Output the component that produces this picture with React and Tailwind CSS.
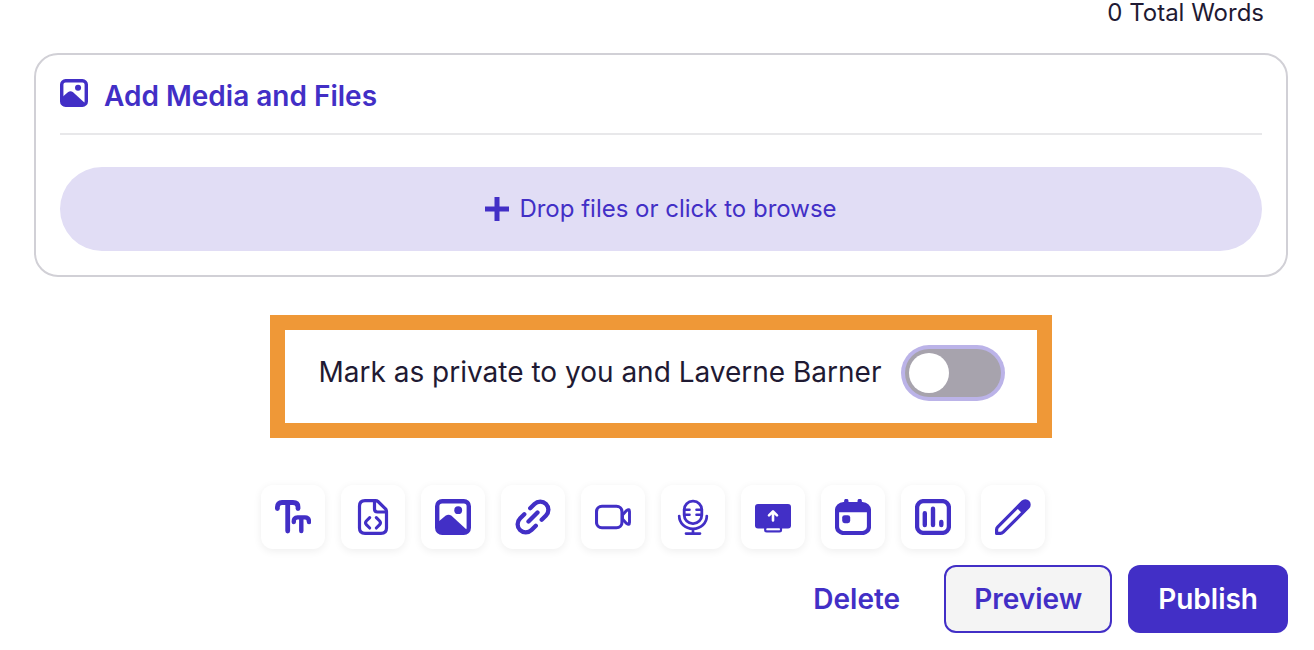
import { useRef, useState } from "react";

function Icon({ children, className = "size-9" }) {
  return (
    <svg
      viewBox="0 0 36 36"
      className={className}
      fill="none"
      stroke="currentColor"
      strokeLinecap="round"
      strokeLinejoin="round"
      aria-hidden="true"
    >
      {children}
    </svg>
  );
}

function ImageIcon({ className }) {
  return (
    <Icon className={className}>
      <rect x="2.2" y="2.2" width="31.6" height="31.6" rx="5" strokeWidth="4.4" />
      <circle cx="23.2" cy="11.2" r="3.9" fill="currentColor" stroke="none" />
      <path
        d="M3 23 L10.5 16.8 Q13.5 14.6 16.5 16.8 L32 31 V34 H3 Z"
        fill="currentColor"
        stroke="none"
      />
    </Icon>
  );
}

const tools = [
  {
    label: "Text",
    icon: (
      <Icon>
        <path
          d="M2.4 9.5 V8 Q2.4 3.5 7 3.5 H18 Q23 3.5 23 8 V9.5 M12.7 3.5 V32"
          strokeWidth="4.8"
        />
        <path
          d="M18.8 23 Q18.5 18.4 22.5 18.4 H30 Q34 18.4 34 23 M26.3 18.6 V32"
          strokeWidth="4.4"
        />
      </Icon>
    ),
  },
  {
    label: "Embed code",
    icon: (
      <Icon>
        <path
          d="M20.5 1.6 H10 Q4.5 1.6 4.5 7 V29 Q4.5 34.4 10 34.4 H26 Q31.5 34.4 31.5 29 V12.5 Q31.5 11 30.5 9.8 L23 2.5 Q22 1.6 20.5 1.6 Z M19.5 2 V10 Q19.5 13 22.5 13 H31"
          strokeWidth="3.2"
        />
        <path
          d="M14.7 18.6 L11.3 22 Q9.8 23.8 11.3 25.6 L14.7 29 M21.3 18.6 L24.7 22 Q26.2 23.8 24.7 25.6 L21.3 29"
          strokeWidth="3.1"
        />
      </Icon>
    ),
  },
  { label: "Image", icon: <ImageIcon className="size-9" /> },
  {
    label: "Link",
    icon: (
      <Icon>
        <path
          d="M15.2 9.3 L19.5 5 A8.13 8.13 0 0 1 31 16.5 L26.7 20.8 M20.8 26.7 L16.5 31 A8.13 8.13 0 0 1 5 19.5 L9.3 15.2 M13.5 22.5 L22.5 13.5"
          strokeWidth="4.3"
        />
      </Icon>
    ),
  },
  {
    label: "Video",
    icon: (
      <Icon>
        <rect x="1.5" y="7.2" width="25.5" height="21.6" rx="5.5" strokeWidth="3.1" />
        <path
          d="M27.5 16 L31.5 11.6 Q34.5 9.4 34.5 12.5 V23.5 Q34.5 26.6 31.5 24.4 L27.5 20 Z"
          strokeWidth="2.9"
        />
      </Icon>
    ),
  },
  {
    label: "Audio",
    icon: (
      <Icon>
        <rect x="9.2" y="2.2" width="17.6" height="22.4" rx="8.5" strokeWidth="2.8" />
        <path
          d="M9.5 10.7 H14.5 M21.5 10.7 H26.5 M9.5 15.7 H14.5 M21.5 15.7 H26.5"
          strokeWidth="2.6"
        />
        <path
          d="M4.2 17 C4.2 24 10 29.8 18 29.8 C26 29.8 31.8 24 31.8 17 M18 30 V34.6 M11 34.6 H25"
          strokeWidth="2.7"
        />
      </Icon>
    ),
  },
  {
    label: "Screen share",
    icon: (
      <Icon>
        <rect x="0" y="5" width="36" height="24.5" rx="3" fill="currentColor" stroke="none" />
        <path d="M10.2 28.5 V31 Q10.2 32.4 11.7 32.4 H24.5 Q26 32.4 26 31 V28.5" strokeWidth="2.2" />
        <path d="M12 30.3 H24.4" stroke="white" strokeWidth="1.6" strokeLinecap="butt" />
        <path d="M18 21.4 V12.8 M14 16.4 L18 12.4 L22 16.4" stroke="white" strokeWidth="2.6" />
      </Icon>
    ),
  },
  {
    label: "Event",
    icon: (
      <Icon>
        <path d="M11.3 2 V6 M24.7 2 V6" strokeWidth="4.4" />
        <rect x="2" y="5.2" width="32" height="28.8" rx="6.5" strokeWidth="4.2" />
        <path d="M2 12 Q2 5 9 5 H27 Q34 5 34 12 V13.3 H2 Z" fill="currentColor" stroke="none" />
        <rect x="7.2" y="16.2" width="8" height="8" rx="2.4" fill="currentColor" stroke="none" />
      </Icon>
    ),
  },
  {
    label: "Poll",
    icon: (
      <Icon>
        <rect x="2.1" y="2.1" width="31.8" height="31.8" rx="6.5" strokeWidth="4.3" />
        <path d="M9.8 14.2 V26 M18 9.8 V26 M26.3 23 V26" strokeWidth="4.4" />
      </Icon>
    ),
  },
  {
    label: "Draw",
    icon: (
      <Icon>
        <path
          d="M1.6 34.4 V30.5 Q1.6 29 2.8 27.8 L27.6 3 A3.8 3.8 0 0 1 33 8.4 L8.2 33.2 Q7 34.4 5.5 34.4 Z"
          strokeWidth="3.2"
        />
        <path
          d="M23.4 8.4 L28.4 3.4 A3.2 3.2 0 0 1 32.6 7.6 L27.6 12.6 Z"
          fill="currentColor"
          strokeWidth="3"
        />
      </Icon>
    ),
  },
];

function App() {
  const [isPrivate, setIsPrivate] = useState(false);
  const fileInput = useRef(null);

  return (
    <main className="bg-white pt-px pr-[26px] pb-4 pl-[34px] font-['Inter',sans-serif] text-[#1f1a33]">
      <p className="pr-6 text-right text-2xl leading-6">0 Total Words</p>

      {/* Media and files */}
      <section className="mt-7 rounded-3xl border-2 border-[#d1d0d6] p-6">
        <div className="flex h-14 items-start gap-4 border-b-2 border-[#e8e8ea] text-[#422fc6]">
          <ImageIcon className="size-7" />
          <h2 className="text-[28px] leading-[34px] font-semibold">Add Media and Files</h2>
        </div>
        <button
          type="button"
          onClick={() => fileInput.current.click()}
          className="mt-8 flex h-21 w-full cursor-pointer items-center justify-center gap-2.5 rounded-full bg-[#e1ddf5] text-2xl text-[#422fc6]"
        >
          <svg viewBox="0 0 24 24" className="size-6" aria-hidden="true">
            <path d="M12 0 V24 M0 12 H24" stroke="currentColor" strokeWidth="5" />
          </svg>
          Drop files or click to browse
        </button>
        <input ref={fileInput} type="file" multiple hidden aria-label="Files" />
      </section>

      {/* Privacy */}
      <div className="mx-auto mt-[38px] flex w-fit items-start gap-6 border-[15px] border-[#ef9837] pt-[19px] pr-9 pb-[26px] pl-[34px]">
        <label htmlFor="private" className="text-[28px] leading-[46px]">
          Mark as private to you and Laverne Barner
        </label>
        <input
          id="private"
          type="checkbox"
          role="switch"
          checked={isPrivate}
          onChange={(e) => setIsPrivate(e.target.checked)}
          className="flex h-12 w-24 shrink-0 cursor-pointer appearance-none rounded-full bg-[#a7a3ad] p-1 ring-4 ring-[#bbb3e8] before:size-10 before:rounded-full before:bg-white before:transition-transform checked:bg-[#422fc6] checked:before:translate-x-12"
        />
      </div>

      {/* Toolbar */}
      <div className="mt-[47px] flex justify-center">
        {tools.map((tool) => (
          <button
            key={tool.label}
            type="button"
            aria-label={tool.label}
            className="mr-4 flex size-16 cursor-pointer items-center justify-center rounded-xl bg-white text-[#422fc6] shadow-[0_2px_8px_rgba(0,0,0,0.07)]"
          >
            {tool.icon}
          </button>
        ))}
      </div>

      {/* Actions */}
      <div className="mt-4 flex justify-end gap-4 text-[28px] font-semibold">
        <button type="button" className="h-17 cursor-pointer px-7 text-[#422fc6]">
          Delete
        </button>
        <button
          type="button"
          className="h-17 cursor-pointer rounded-xl border-2 border-[#422fc6] bg-[#f4f4f4] px-7 text-[#422fc6]"
        >
          Preview
        </button>
        <button type="button" className="h-17 cursor-pointer rounded-xl bg-[#422fc6] px-[30px] text-white">
          Publish
        </button>
      </div>
    </main>
  );
}

export default App;
